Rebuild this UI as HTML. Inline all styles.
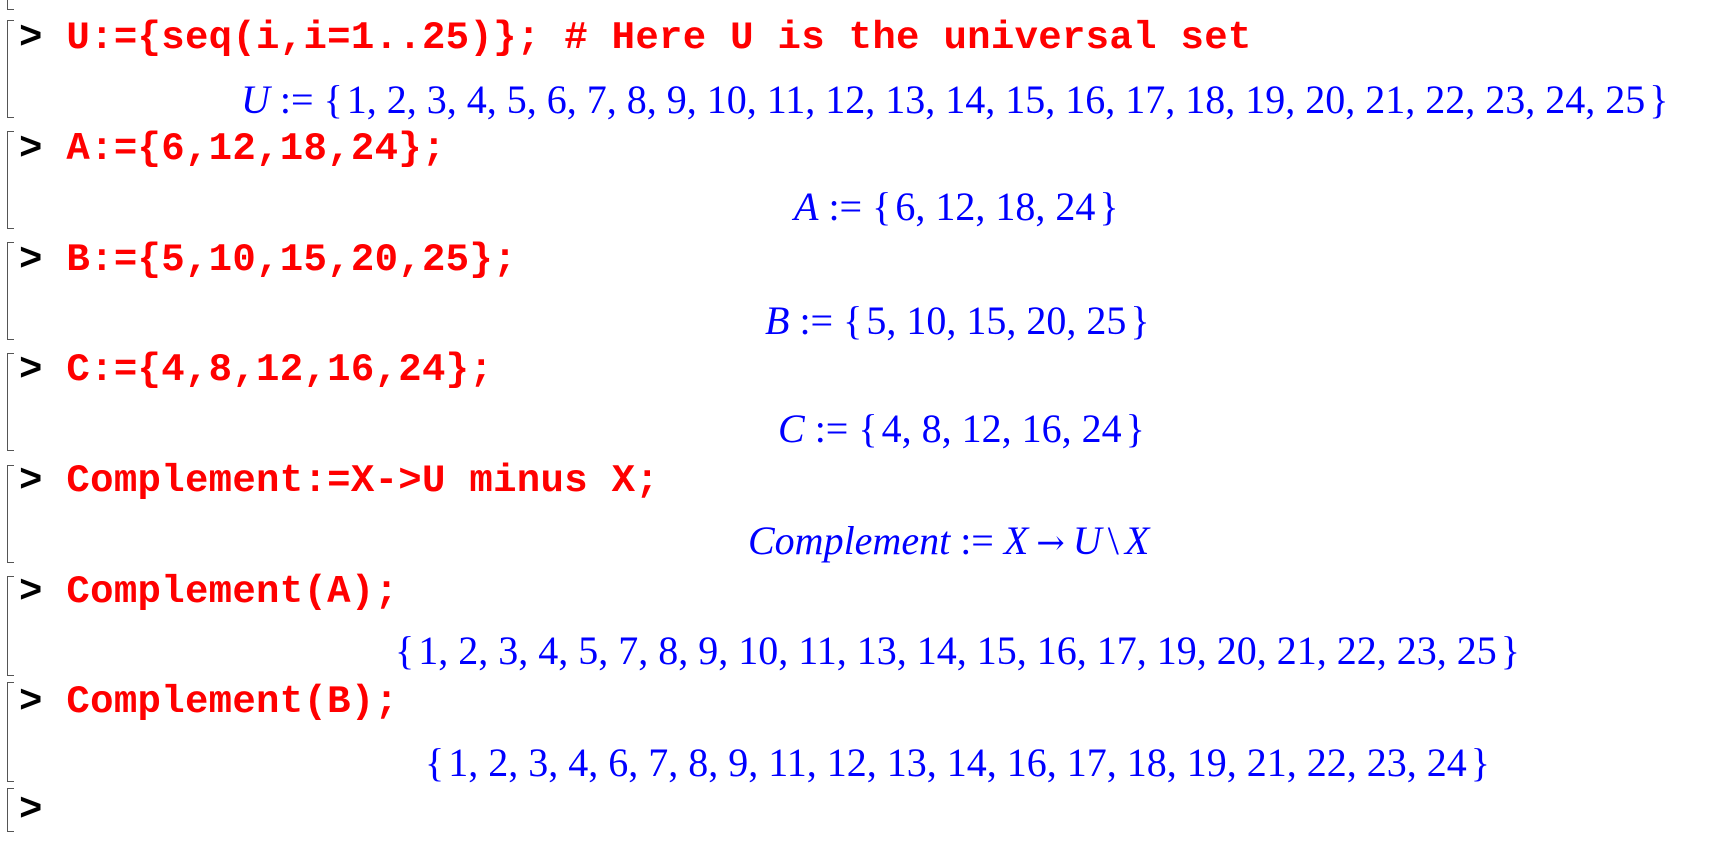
<!DOCTYPE html>
<html><head><meta charset="utf-8"><style>
html,body{margin:0;padding:0;background:#fff;width:1725px;height:852px;overflow:hidden;position:relative}
.r{position:absolute;left:19px;font:bold 39px/39px "Liberation Mono",monospace;color:#f00;white-space:pre;letter-spacing:0.3px}
.r b{color:#000}
.b{position:absolute;font:40px/40px "Liberation Serif",serif;color:#00f;white-space:pre}
.b i{font-style:italic}
.b s{text-decoration:none;display:inline-block;width:4px}
.ar{font-family:"DejaVu Serif",serif;font-size:34px;margin:0 8px}
.sm{margin:0 6px}
.br{position:absolute;left:7px;width:6px;border:1.5px solid #555;border-right:none}
</style></head><body>
<div class="br" style="top:-10px;height:18px"></div>
<div class="br" style="top:20px;height:96px"></div>
<div class="br" style="top:131px;height:96px"></div>
<div class="br" style="top:242px;height:96px"></div>
<div class="br" style="top:353px;height:96px"></div>
<div class="br" style="top:465px;height:96px"></div>
<div class="br" style="top:576px;height:98px"></div>
<div class="br" style="top:682px;height:98px"></div>
<div class="br" style="top:788px;height:42px"></div>

<div class="r" style="top:19px"><b>&gt;</b> U:={seq(i,i=1..25)}; # Here U is the universal set</div>
<div class="b" style="top:80px;left:241px"><i>U</i> := {<s></s>1, 2, 3, 4, 5, 6, 7, 8, 9, 10, 11, 12, 13, 14, 15, 16, 17, 18, 19, 20, 21, 22, 23, 24, 25<s></s>}</div>

<div class="r" style="top:130px"><b>&gt;</b> A:={6,12,18,24};</div>
<div class="b" style="top:187px;left:794px"><i>A</i> := {<s></s>6, 12, 18, 24<s></s>}</div>

<div class="r" style="top:241px"><b>&gt;</b> B:={5,10,15,20,25};</div>
<div class="b" style="top:301px;left:765px"><i>B</i> := {<s></s>5, 10, 15, 20, 25<s></s>}</div>

<div class="r" style="top:351px"><b>&gt;</b> C:={4,8,12,16,24};</div>
<div class="b" style="top:409px;left:778px"><i>C</i> := {<s></s>4, 8, 12, 16, 24<s></s>}</div>

<div class="r" style="top:462px"><b>&gt;</b> Complement:=X-&gt;U minus X;</div>
<div class="b" style="top:521px;left:748px"><i>Complement</i> := <i>X</i><span class="ar">→</span><i>U</i><span class="sm">\</span><i>X</i></div>

<div class="r" style="top:573px"><b>&gt;</b> Complement(A);</div>
<div class="b" style="top:631px;left:395px">{<s></s>1, 2, 3, 4, 5, 7, 8, 9, 10, 11, 13, 14, 15, 16, 17, 19, 20, 21, 22, 23, 25<s></s>}</div>

<div class="r" style="top:683px"><b>&gt;</b> Complement(B);</div>
<div class="b" style="top:743px;left:425px">{<s></s>1, 2, 3, 4, 6, 7, 8, 9, 11, 12, 13, 14, 16, 17, 18, 19, 21, 22, 23, 24<s></s>}</div>

<div class="r" style="top:791px"><b>&gt;</b></div>
</body></html>
